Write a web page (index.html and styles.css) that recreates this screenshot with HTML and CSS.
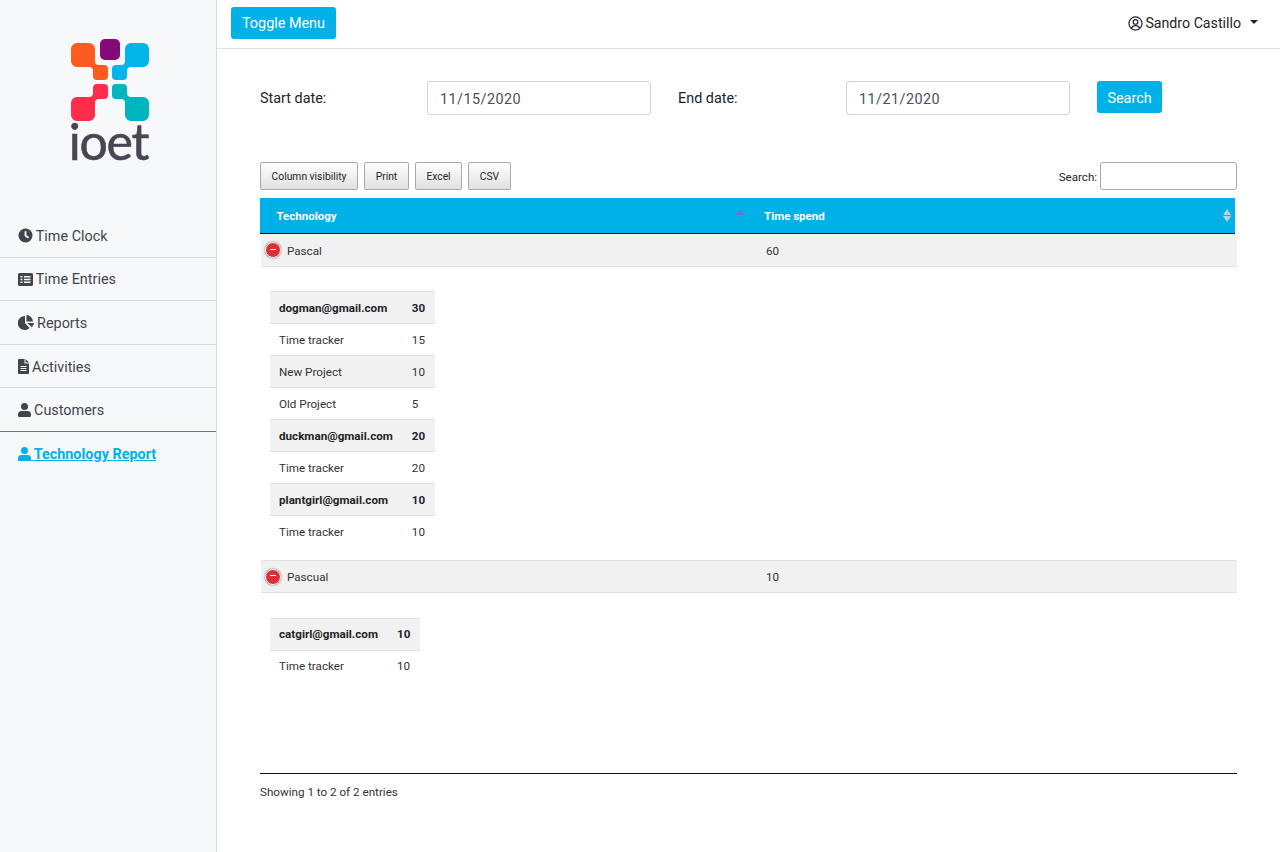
FILE: index.html
```html
<!DOCTYPE html>
<html lang="en">
<head>
    <meta charset="UTF-8">
    <meta name="viewport" content="width=device-width, initial-scale=1.0">
    <title>Technology Report</title>
    <link rel="stylesheet" href="styles.css">
</head>
<body>
    <div class="wrapper">
        <nav class="sidebar">
            <div class="logo">
                <svg class="logo-mark" width="78" height="82" viewBox="0 0 78 82">
                    <defs>
                        <path id="arm" d="M6 4H18a6 6 0 0 1 6 6V22a4 4 0 0 0 4 4H33a4 4 0 0 1 4 4V37a4 4 0 0 1-4 4H26a4 4 0 0 1-4-4V32a4 4 0 0 0-4-4H6a6 6 0 0 1-6-6V10a6 6 0 0 1 6-6z"/>
                    </defs>
                    <use href="#arm" fill="#ff5a1f"/>
                    <rect fill="#850a78" x="29" y="0" width="20" height="21" rx="5"/>
                    <use href="#arm" fill="#00b5ea" transform="translate(78 0) scale(-1 1)"/>
                    <use href="#arm" fill="#ff2d4c" transform="translate(0 86) scale(1 -1)"/>
                    <use href="#arm" fill="#00b5bd" transform="translate(78 86) scale(-1 -1)"/>
                </svg>
                <span class="logo-text">ioet</span>
            </div>
            <ul class="menu">
                <li>
                    <a href="#">
                        <svg class="icon" width="15" height="15" viewBox="0 0 16 16"><path fill="currentColor" fill-rule="evenodd" d="M8 .5a7.500 7.500 0 1 0 0 15 7.500 7.500 0 0 0 0-15zM7 3.500h2v4.100l2.800 2-1.100 1.600L7 8.600z"/></svg>
                        Time Clock
                    </a>
                </li>
                <li>
                    <a href="#">
                        <svg class="icon" width="15" height="13" viewBox="0 0 15 13"><path fill="currentColor" fill-rule="evenodd" d="M1.500 0h12A1.500 1.500 0 0 1 15 1.500v10a1.500 1.500 0 0 1-1.500 1.500h-12A1.500 1.500 0 0 1 0 11.500v-10A1.500 1.500 0 0 1 1.500 0zM2.500 3v1.500h2V3zM6 3v1.500h6.500V3zM2.500 5.800v1.500h2V5.800zM6 5.800v1.500h6.500V5.800zM2.500 8.600v1.500h2V8.600zM6 8.600v1.500h6.500V8.600z"/></svg>
                        Time Entries
                    </a>
                </li>
                <li>
                    <a href="#">
                        <svg class="icon" width="16" height="15" viewBox="0 0 16 15"><path fill="currentColor" d="M7 1v7l4.600 5A7 7 0 1 1 7 1zM8.500 0A7 7 0 0 1 15 6.500H8.500zM9.200 8H16a7 7 0 0 1-2.100 4.200z"/></svg>
                        Reports
                    </a>
                </li>
                <li>
                    <a href="#">
                        <svg class="icon" width="11" height="15" viewBox="0 0 11 15"><path fill="currentColor" fill-rule="evenodd" d="M0 1a1 1 0 0 1 1-1h5.500v4a.5.5 0 0 0 .5.500h4V14a1 1 0 0 1-1 1H1a1 1 0 0 1-1-1zM7.500 0L11 3.500H7.500zM2.500 7v1h6V7zM2.500 9v1h6V9zM2.500 11v1h6v-1z"/></svg>
                        Activities
                    </a>
                </li>
                <li>
                    <a href="#">
                        <svg class="icon" width="13" height="14" viewBox="0 0 13 14"><path fill="currentColor" d="M6.500 0a3.500 3.500 0 1 1 0 7 3.500 3.500 0 0 1 0-7zM3.500 8h6A3.500 3.500 0 0 1 13 11.500v1.200a1.300 1.300 0 0 1-1.300 1.300H1.300A1.300 1.300 0 0 1 0 12.700v-1.200A3.500 3.500 0 0 1 3.500 8z"/></svg>
                        Customers
                    </a>
                </li>
                <li class="active">
                    <a href="#">
                        <svg class="icon" width="13" height="14" viewBox="0 0 13 14"><path fill="currentColor" d="M6.500 0a3.500 3.500 0 1 1 0 7 3.500 3.500 0 0 1 0-7zM3.500 8h6A3.500 3.500 0 0 1 13 11.500v1.200a1.300 1.300 0 0 1-1.300 1.300H1.300A1.300 1.300 0 0 1 0 12.700v-1.200A3.500 3.500 0 0 1 3.500 8z"/></svg>
                        Technology Report
                    </a>
                </li>
            </ul>
        </nav>

        <div class="content">
            <header class="topbar">
                <button class="btn-primary toggle-btn">Toggle Menu</button>
                <a class="user-menu" href="#">
                    <svg width="15" height="15" viewBox="0 0 16 16"><g fill="none" stroke="currentColor" stroke-width="1.300"><circle cx="8" cy="8" r="7"/><circle cx="8" cy="6.300" r="2.500"/><path d="M3.500 13c.8-2 2.500-2.800 4.500-2.800s3.700.8 4.500 2.800"/></g></svg>
                    Sandro Castillo
                    <span class="caret"></span>
                </a>
            </header>

            <main class="page">
                <form class="date-form">
                    <label class="date-label">Start date:</label>
                    <input class="date-input" type="text" value="11/15/2020">
                    <label class="date-label end-label">End date:</label>
                    <input class="date-input" type="text" value="11/21/2020">
                    <button type="button" class="btn-primary search-btn">Search</button>
                </form>

                <div class="toolbar">
                    <div class="dt-buttons">
                        <button class="dt-btn">Column visibility</button>
                        <button class="dt-btn">Print</button>
                        <button class="dt-btn">Excel</button>
                        <button class="dt-btn">CSV</button>
                    </div>
                    <label class="dt-search">Search: <input type="text"></label>
                </div>

                <div class="report-head">
                    <div class="head-tech">Technology<span class="sort-up"></span></div>
                    <div class="head-time">Time spend<span class="sort-both"></span></div>
                </div>

                <div class="report-row">
                    <div class="cell-tech"><span class="minus"></span>Pascal</div>
                    <div class="cell-time">60</div>
                </div>
                <div class="child-wrap">
                    <table class="child-table">
                        <tr class="odd strong"><td>dogman@gmail.com</td><td>30</td></tr>
                        <tr><td>Time tracker</td><td>15</td></tr>
                        <tr class="odd"><td>New Project</td><td>10</td></tr>
                        <tr><td>Old Project</td><td>5</td></tr>
                        <tr class="odd strong"><td>duckman@gmail.com</td><td>20</td></tr>
                        <tr><td>Time tracker</td><td>20</td></tr>
                        <tr class="odd strong"><td>plantgirl@gmail.com</td><td>10</td></tr>
                        <tr class="last"><td>Time tracker</td><td>10</td></tr>
                    </table>
                </div>

                <div class="report-row second-row">
                    <div class="cell-tech"><span class="minus"></span>Pascual</div>
                    <div class="cell-time">10</div>
                </div>
                <div class="child-wrap second-wrap">
                    <table class="child-table">
                        <tr class="odd strong"><td>catgirl@gmail.com</td><td>10</td></tr>
                        <tr class="last"><td>Time tracker</td><td>10</td></tr>
                    </table>
                </div>

                <div class="report-foot">Showing 1 to 2 of 2 entries</div>
            </main>
        </div>
    </div>
</body>
</html>
```

FILE: styles.css
```css
* {
    box-sizing: border-box;
}
body {
    margin: 0;
    font-family: Roboto, Arial, sans-serif;
    font-size: 14px;
    color: #212529;
    background: white;
}
.wrapper {
    display: flex;
    min-height: 852px;
}

/* sidebar */
.sidebar {
    width: 217px;
    flex-shrink: 0;
    background: #f7f8fa;
    border-right: 1px solid #d5d8dc;
}
.logo {
    height: 214px;
    padding-top: 39px;
    display: flex;
    flex-direction: column;
    align-items: center;
}
.logo-mark {
    display: block;
    margin-left: 3px;
}
.logo-text {
    margin-top: -5px;
    margin-left: 1px;
    font-family: Lato, sans-serif;
    font-size: 50px;
    line-height: 50px;
    letter-spacing: -1.2px;
    color: #4a4553;
    -webkit-text-stroke: 0.6px #4a4553;
}
.menu {
    list-style: none;
    margin: 0;
    padding: 0;
}
.menu li {
    height: 43.6px;
    padding: 12.75px 0 0 18px;
    border-bottom: 1px solid #d5d8dc;
    font-size: 14.4px;
    line-height: 20px;
}
.menu li:nth-child(5) {
    border-bottom-color: #6c7a80;
}
.menu li.active {
    border-bottom: none;
    font-weight: 700;
}
.menu a {
    color: #3f454b;
    text-decoration: none;
}
.menu li.active a {
    color: #00b1e8;
    text-decoration: underline;
}
.icon {
    vertical-align: -2px;
    margin-right: -0.5px;
}

/* top bar */
.content {
    flex: 1;
    min-width: 0;
}
.topbar {
    height: 49px;
    padding: 7px 22px 0 14px;
    display: flex;
    justify-content: space-between;
    border-bottom: 1px solid #dee2e6;
}
.btn-primary {
    background: #00b1e8;
    color: white;
    border: none;
    border-radius: 3px;
    font-family: Roboto, Arial, sans-serif;
    font-size: 14.4px;
    cursor: pointer;
}
.toggle-btn {
    width: 105px;
    height: 32px;
}
.user-menu {
    display: flex;
    align-items: center;
    gap: 2px;
    height: 32px;
    color: #212529;
    text-decoration: none;
    font-size: 14.2px;
}
.caret {
    margin-left: 7px;
    margin-bottom: 3px;
    border-top: 4px solid #212529;
    border-left: 4px solid transparent;
    border-right: 4px solid transparent;
}

/* page */
.page {
    padding: 32px 43px 0 43px;
}
.date-form {
    display: flex;
    align-items: flex-start;
    height: 81px;
}
.date-label {
    width: 167px;
    font-size: 14.4px;
    line-height: 36px;
    color: #212529;
}
.end-label {
    width: 168px;
    margin-left: 27px;
}
.date-input {
    width: 224px;
    height: 34px;
    padding: 2px 12px 0;
    border: 1px solid #ced4da;
    border-radius: 3px;
    font-family: Roboto, Arial, sans-serif;
    font-size: 14.4px;
    letter-spacing: 0.45px;
    color: #495057;
}
.search-btn {
    width: 65px;
    height: 32px;
    padding-top: 3px;
    margin-left: 27px;
}

/* table tools */
.toolbar {
    width: 977px;
    height: 36px;
    display: flex;
    justify-content: space-between;
}
.dt-buttons {
    display: flex;
    gap: 6px;
}
.dt-btn {
    height: 28px;
    padding: 0 10.6px;
    border: 1px solid #a9a9a9;
    border-radius: 2px;
    background: linear-gradient(#ffffff, #e0e0e0);
    font-family: Roboto, Arial, sans-serif;
    font-size: 10.3px;
    color: #212529;
}
.dt-search {
    height: 28px;
    font-size: 11.6px;
    line-height: 30px;
}
.dt-search input {
    width: 137px;
    height: 28px;
    padding: 0 4px;
    border: 1px solid #a9a9a9;
    border-radius: 3px;
    vertical-align: top;
}

/* report table */
.report-head {
    width: 975px;
    height: 36px;
    display: flex;
    background: #00b1e8;
    border-bottom: 1px solid #111;
    color: white;
    font-size: 11.5px;
    font-weight: 700;
    line-height: 36px;
}
.head-tech {
    position: relative;
    width: 487px;
    padding-left: 16.5px;
}
.head-time {
    position: relative;
    flex: 1;
    padding-left: 17px;
}
.sort-up {
    position: absolute;
    right: 3px;
    top: 12px;
    border-bottom: 5px solid #7d6bc8;
    border-left: 4px solid transparent;
    border-right: 4px solid transparent;
}
.sort-both {
    position: absolute;
    right: 4px;
    top: 11px;
    width: 8px;
    height: 13px;
}
.sort-both::before {
    content: "";
    position: absolute;
    top: 0;
    left: 0;
    border-bottom: 6px solid #bcd0d8;
    border-left: 4px solid transparent;
    border-right: 4px solid transparent;
}
.sort-both::after {
    content: "";
    position: absolute;
    bottom: 0;
    left: 0;
    border-top: 6px solid #bcd0d8;
    border-left: 4px solid transparent;
    border-right: 4px solid transparent;
}
.report-row {
    width: 976px;
    height: 33px;
    margin-left: 1px;
    padding-top: 1px;
    display: flex;
    align-items: center;
    background: #f1f1f1;
    border-bottom: 1px solid #dee2e6;
    font-size: 11.65px;
    color: #333;
}
.second-row {
    border-top: 1px solid #dee2e6;
    padding-top: 2px;
}
.cell-tech {
    width: 489px;
    display: flex;
    align-items: center;
    padding-left: 4px;
}
.cell-time {
    padding-left: 16px;
}
.minus {
    position: relative;
    width: 16px;
    height: 16px;
    margin-top: -1px;
    margin-right: 6px;
    border: 1.5px solid white;
    border-radius: 50%;
    background: #dc3035;
    box-shadow: 0 0 2px #555;
}
.minus::after {
    content: "";
    position: absolute;
    left: 3.5px;
    top: 5.5px;
    width: 6px;
    height: 1px;
    background: white;
}
.child-wrap {
    padding: 24px 0 12px 10px;
}
.second-wrap {
    padding-top: 25px;
}
.child-table {
    border-collapse: collapse;
    font-size: 11.65px;
    color: #333;
    border-top: 1px solid #dee2e6;
}
.child-table td {
    height: 32px;
    padding: 0 10px 0 9px;
    border-bottom: 1px solid #dee2e6;
}
.child-table .odd td {
    background: #f1f1f1;
}
.child-table .strong td {
    font-weight: 700;
    color: #212529;
}
.child-table .last td {
    border-bottom: none;
}
.report-foot {
    width: 977px;
    margin-top: 79px;
    padding-top: 11px;
    border-top: 1px solid #111;
    font-size: 11.65px;
    color: #333;
}
```
